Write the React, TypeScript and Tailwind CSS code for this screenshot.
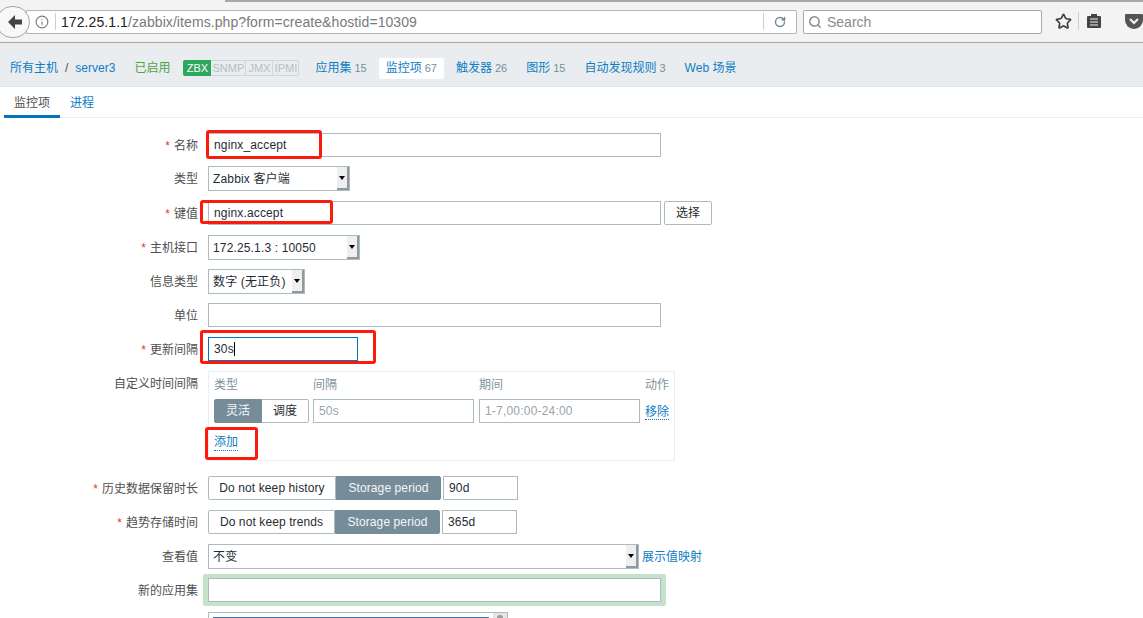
import { Info, RotateCw, Search, Star } from "lucide-react";
import type { ReactNode } from "react";

const font = "font-['Liberation_Sans','Noto_Sans_CJK_SC',sans-serif]";

function Label({ text, req }: { text: string; req?: boolean }) {
  return (
    <div className="h-[24px] text-right text-[12px] text-[#4f4f4f] leading-[26px]">
      {req && <span className="text-[#e33734] mr-[4px]">*</span>}
      {text}
    </div>
  );
}

function Input({ w, value, className }: { w: string; value?: string; className?: string }) {
  return (
    <div className={`h-[24px] ${w} border border-[#acbbc2] bg-white px-[5px] text-[12px] tracking-[0.15px] leading-[22px] text-[#1f2c33] ${className ?? ""}`}>
      {value}
    </div>
  );
}

function Select({ w, value }: { w: string; value: string }) {
  return (
    <div className={`h-[25px] ${w} border border-[#acbbc2] bg-white flex items-center justify-between text-[12px] tracking-[0.15px] text-[#1f2c33]`}>
      <span className="pl-[4px] whitespace-nowrap">{value}</span>
      <span className="w-[12px] h-full bg-[#efefef] border-r-2 border-b-2 border-[#8f9a9f] flex items-center justify-center shrink-0">
        <span className="w-0 h-0 border-l-[3px] border-r-[3px] border-t-[4px] border-l-transparent border-r-transparent border-t-black" />
      </span>
    </div>
  );
}

function Toggle({ left, right, lw, rw }: { left: string; right: string; lw: string; rw: string }) {
  return (
    <div className="flex h-[24px] text-[12px] tracking-[0.1px] leading-[22px] text-center">
      <div className={`${lw} border border-[#acbbc2] rounded-l-[2px] bg-white text-[#1f2c33]`}>{left}</div>
      <div className={`${rw} bg-[#768d99] border border-[#768d99] rounded-r-[2px] text-[#f4f6f7]`}>{right}</div>
    </div>
  );
}

function NavItem({ text, count, active }: { text: string; count?: string; active?: boolean }) {
  return (
    <div className={"h-[21px] px-[7px] flex items-center rounded-[2px] whitespace-nowrap " + (active ? "bg-white" : "")}>
      <span className="text-[#0f7dc2]">{text}</span>
      {count && <span className="ml-[3px] text-[11px] text-[#768d99]">{count}</span>}
    </div>
  );
}

function Row({ label, req, children, className }: { label: string; req?: boolean; children: ReactNode; className?: string }) {
  return (
    <div className={`flex gap-[10px] ${className ?? ""}`}>
      <div className="w-[198px] shrink-0"><Label text={label} req={req} /></div>
      <div>{children}</div>
    </div>
  );
}

function Mark({ className }: { className: string }) {
  return <div className={`absolute border-[3px] border-[#fb1a0c] rounded-[3px] ${className}`} />;
}

export default function App() {
  return (
    <div className={`${font} relative w-[1143px] h-[618px] overflow-hidden bg-white`}>
      {/* browser toolbar */}
      <div className="h-[43px] bg-[#f3f3f3] border-b border-[#a8a8a8] flex items-center pl-[2px] relative">
        <div className="absolute left-[225px] top-0 right-0 h-[2px] bg-[#a8a8a8]" />
        <div className="-ml-[6px] w-[34px] h-[32px] rounded-full bg-[#f8f8f8] border border-[#a5a5a5] flex items-center justify-center z-10 shrink-0 mt-[1px] pl-[5px]">
          <svg width="15" height="14" viewBox="0 0 15 14"><path d="M7 0 0 7l7 7V9.500h7v-5H7z" fill="#444" /></svg>
        </div>
        <div className="-ml-[4px] w-[771px] h-[24px] bg-white border border-[#b5b5b5] rounded-r-[2px] flex items-center text-[14px] mt-[1px]">
          <Info className="ml-[8px] w-[14px] h-[14px] text-[#7c7c7c]" />
          <div className="ml-[6px] w-px h-[17px] bg-[#cfcfcf]" />
          <span className="ml-[5px] pt-[2px] text-[#222] tracking-[0.08px]">172.25.1.1</span>
          <span className="pt-[2px] text-[#7a7a7a] tracking-[0.08px]">/zabbix/items.php?form=create&amp;hostid=10309</span>
          <div className="ml-auto w-px h-[17px] bg-[#cfcfcf]" />
          <RotateCw className="mx-[10px] w-[12px] h-[12px] text-[#7c8c95]" strokeWidth={3} />
        </div>
        <div className="ml-[6px] w-[239px] h-[24px] bg-white border border-[#a9a9a9] rounded-[2px] flex items-center text-[14px] text-[#8a8a8a] mt-[1px]">
          <Search className="ml-[4px] w-[14px] h-[14px] text-[#8a8a8a]" strokeWidth={2.5} />
          <span className="ml-[5px] pt-[2px]">Search</span>
        </div>
        <Star className="ml-[13px] w-[17px] h-[17px] text-[#3f3f3f]" strokeWidth={2.4} />
        <div className="ml-[6px] w-px h-[18px] bg-[#cfcfcf]" />
        <svg className="ml-[8px] shrink-0" width="14" height="16" viewBox="0 0 14 16">
          <path d="M1 3h3V1h6v2h3a1 1 0 0 1 1 1v10a1 1 0 0 1-1 1H1a1 1 0 0 1-1-1V4a1 1 0 0 1 1-1z" fill="#444" />
          <path d="M3 6h8M3 9h8M3 12h8" stroke="#f3f3f3" strokeWidth="1.2" />
        </svg>
        <svg className="ml-[24px] shrink-0" width="18" height="15" viewBox="0 0 18 15">
          <path d="M1 0h16a1 1 0 0 1 1 1v5a9 9 0 0 1-18 0V1a1 1 0 0 1 1-1z" fill="#555" />
          <path d="m5 5 4 4 4-4" stroke="#f3f3f3" strokeWidth="2" fill="none" />
        </svg>
      </div>

      {/* host navigation */}
      <div className="h-[44px] bg-[#e9edf0] border-b border-[#dfe4e7] pl-[10px] flex items-center text-[12px] pt-[7px]">
        <span className="text-[#0f7dc2]">所有主机</span>
        <span className="mx-[7px] text-[#4f4f4f]">/</span>
        <span className="text-[#0f7dc2]">server3</span>
        <span className="ml-[19px] text-[#4ba34b]">已启用</span>
        <div className="ml-[13px] flex h-[16px] text-[11px] leading-[15px] text-center text-[#b6bfc4]">
          <span className="w-[28px] bg-[#2ca85c] text-white rounded-l-[2px] leading-[16px]">ZBX</span>
          <span className="w-[35px] border border-l-0 border-[#cfd6da]">SNMP</span>
          <span className="w-[27px] border border-l-0 border-[#cfd6da]">JMX</span>
          <span className="w-[26px] border border-l-0 border-[#cfd6da] rounded-r-[2px]">IPMI</span>
        </div>
        <div className="ml-[9px] flex gap-[5px]">
          <NavItem text="应用集" count="15" />
          <NavItem text="监控项" count="67" active />
          <NavItem text="触发器" count="26" />
          <NavItem text="图形" count="15" />
          <NavItem text="自动发现规则" count="3" />
          <NavItem text="Web 场景" />
        </div>
      </div>

      {/* tabs */}
      <div className="ml-[4px] h-[31px] border-b border-[#ebeef0] flex text-[12px] leading-[32px]">
        <div className="w-[56px] h-[31px] border-b-[3px] border-[#0275b8] text-center text-[#4f4f4f]">监控项</div>
        <div className="ml-[10px] text-[#0f7dc2]">进程</div>
      </div>

      {/* form */}
      <div className="pt-[15px] flex flex-col gap-[10px]">
        <Row label="名称" req><Input w="w-[453px]" value="nginx_accept" /></Row>
        <Row label="类型" className="-mt-px"><Select w="w-[142px]" value="Zabbix 客户端" /></Row>
        <Row label="键值" req>
          <div className="flex gap-[3px]">
            <Input w="w-[453px]" value="nginx.accept" />
            <div className="h-[24px] w-[48px] border border-[#acbbc2] rounded-[2px] text-center text-[12px] leading-[22px] text-[#1f2c33]">选择</div>
          </div>
        </Row>
        <Row label="主机接口" req><Select w="w-[152px]" value="172.25.1.3 : 10050" /></Row>
        <Row label="信息类型" className="-mt-px"><Select w="w-[97px]" value="数字 (无正负)" /></Row>
        <Row label="单位" className="-mt-px"><Input w="w-[453px]" /></Row>
        <Row label="更新间隔" req>
          <div className="h-[24px] w-[150px] border border-[#0275b8] bg-white px-[5px] text-[12px] tracking-[0.15px] leading-[22px] text-[#1f2c33] flex items-center">
            30s<span className="w-px h-[14px] bg-black" />
          </div>
        </Row>
        <Row label="自定义时间间隔">
          <div className="w-[467px] h-[90px] border border-[#ebeef0] px-[5px] text-[12px]">
            <div className="flex h-[26px] items-center text-[#7f939e]">
              <span className="w-[99px]">类型</span>
              <span className="w-[166px]">间隔</span>
              <span className="w-[166px]">期间</span>
              <span>动作</span>
            </div>
            <div className="flex items-center mt-[1px]">
              <div className="flex h-[24px] w-[95px] leading-[22px] text-center">
                <div className="w-[48px] bg-[#768d99] border border-[#768d99] rounded-l-[2px] text-[#f4f6f7]">灵活</div>
                <div className="w-[47px] border border-l-0 border-[#acbbc2] rounded-r-[2px] text-[#1f2c33]">调度</div>
              </div>
              <div className="ml-[4px] w-[161px] h-[24px] border border-[#acbbc2] px-[5px] leading-[22px] tracking-[0.2px] text-[#9aa4aa]">50s</div>
              <div className="ml-[5px] w-[161px] h-[24px] border border-[#acbbc2] px-[5px] leading-[22px] tracking-[0.2px] text-[#9aa4aa]">1-7,00:00-24:00</div>
              <span className="ml-[5px] mt-[3px] text-[#0f7dc2] border-b border-dotted border-[#0f7dc2] leading-[14px]">移除</span>
            </div>
            <span className="inline-block mt-[11px] text-[#0f7dc2] border-b border-dotted border-[#0f7dc2] leading-[16px]">添加</span>
          </div>
        </Row>
        <div className="h-[5px]" />
        <Row label="历史数据保留时长" req className="-mt-[10px]">
          <div className="flex gap-[2px]">
            <Toggle left="Do not keep history" right="Storage period" lw="w-[128px]" rw="w-[105px]" />
            <Input w="w-[75px]" value="90d" />
          </div>
        </Row>
        <Row label="趋势存储时间" req>
          <div className="flex gap-[2px]">
            <Toggle left="Do not keep trends" right="Storage period" lw="w-[127px]" rw="w-[105px]" />
            <Input w="w-[75px]" value="365d" />
          </div>
        </Row>
        <Row label="查看值">
          <div className="flex items-center gap-[3px]">
            <Select w="w-[431px]" value="不变" />
            <span className="text-[12px] text-[#0f7dc2]">展示值映射</span>
          </div>
        </Row>
        <Row label="新的应用集" className="-mt-px">
          <div className="-mx-[5px] -my-[4px] w-[463px] h-[32px] bg-[#c4e3c8] rounded-[2px] p-[5px] pt-[4px]">
            <Input w="w-[453px]" />
          </div>
        </Row>
        <Row label="">
          <div className="w-[300px] h-[24px] border border-[#acbbc2] relative overflow-hidden pt-[4px] pl-[4px] pr-[18px]">
            <div className="h-full bg-[#3d78b5]" />
            <div className="absolute right-0 top-0 w-[14px] h-full bg-[#e6e6e6] flex justify-center pt-[2px]">
              <span className="w-[6px] h-[4px] rounded-t-full bg-[#9a9a9a]" />
            </div>
          </div>
        </Row>
      </div>

      {/* red annotation boxes */}
      <Mark className="left-[206px] top-[130px] w-[116px] h-[29px]" />
      <Mark className="left-[200px] top-[200px] w-[133px] h-[24px]" />
      <Mark className="left-[200px] top-[330px] w-[176px] h-[34px]" />
      <Mark className="left-[205px] top-[427px] w-[53px] h-[33px]" />
    </div>
  );
}
